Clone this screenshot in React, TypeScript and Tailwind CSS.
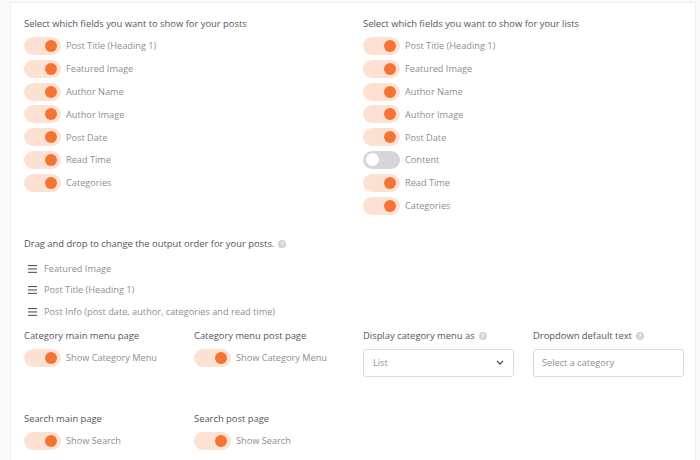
import React from 'react'

const font = { fontFamily: '"Open Sans", "Liberation Sans", sans-serif' }

function Toggle({ on = true }: { on?: boolean }) {
  return (
    <div
      className={`w-[37px] h-[18px] rounded-full flex items-center shrink-0 ${
        on ? 'bg-[#fde2d4] justify-end pr-[4px]' : 'bg-[#d6d6d6] justify-start pl-[3px]'
      }`}
    >
      <div className={`rounded-full ${on ? 'w-[12px] h-[12px] bg-[#f47533]' : 'w-[13px] h-[13px] bg-white'}`} />
    </div>
  )
}

function ToggleRow({ label, on = true }: { label: string; on?: boolean }) {
  return (
    <div className="flex items-center gap-[5px] h-[18px]">
      <Toggle on={on} />
      <span className="text-[9.2px] text-[#8c8f94] leading-none">{label}</span>
    </div>
  )
}

function Help() {
  return (
    <span className="inline-flex items-center justify-center w-[8px] h-[8px] rounded-full bg-[#d3d3d3] text-white text-[6px] font-bold leading-none ml-[4px]">
      ?
    </span>
  )
}

function Heading({ children }: { children: React.ReactNode }) {
  return <div className="text-[9.4px] text-[#50575e] leading-[14px] flex items-center">{children}</div>
}

function Hamburger() {
  return (
    <svg width="9" height="8" viewBox="0 0 9 8" className="shrink-0">
      <rect x="0" y="0" width="9" height="1.1" fill="#555" />
      <rect x="0" y="3.4" width="9" height="1.1" fill="#555" />
      <rect x="0" y="6.8" width="9" height="1.1" fill="#555" />
    </svg>
  )
}

const postFields = ['Post Title (Heading 1)', 'Featured Image', 'Author Name', 'Author Image', 'Post Date', 'Read Time', 'Categories']
const listFields: [string, boolean][] = [
  ['Post Title (Heading 1)', true],
  ['Featured Image', true],
  ['Author Name', true],
  ['Author Image', true],
  ['Post Date', true],
  ['Content', false],
  ['Read Time', true],
  ['Categories', true],
]
const order = ['Featured Image', 'Post Title (Heading 1)', 'Post Info (post date, author, categories and read time)']

export default function App() {
  return (
    <div className="w-[700px] h-[460px] bg-[#fafafa] overflow-hidden" style={font}>
      <div className="ml-[10px] mt-[2px] w-[686px] h-[470px] bg-white border border-[#efefef] pl-[13px] pt-[14px]">
        <div className="grid grid-cols-[339px_1fr]">
          <div>
            <Heading>Select which fields you want to show for your posts</Heading>
            <div className="flex flex-col gap-[4.8px] mt-[6px]">
              {postFields.map((f) => (
                <ToggleRow key={f} label={f} />
              ))}
            </div>
          </div>
          <div>
            <Heading>Select which fields you want to show for your lists</Heading>
            <div className="flex flex-col gap-[4.8px] mt-[6px]">
              {listFields.map(([f, on]) => (
                <ToggleRow key={f} label={f} on={on} />
              ))}
            </div>
          </div>
        </div>

        <div className="mt-[22px]">
          <Heading>
            Drag and drop to change the output order for your posts.
            <Help />
          </Heading>
          <div className="flex flex-col gap-[7.5px] mt-[11px] pl-[4px]">
            {order.map((o) => (
              <div key={o} className="flex items-center gap-[7px] h-[14px]">
                <Hamburger />
                <span className="text-[9.2px] text-[#8c8f94] leading-none">{o}</span>
              </div>
            ))}
          </div>
        </div>

        <div className="grid grid-cols-[170px_169px_170px_151px] mt-[10px]">
          <div>
            <Heading>Category main menu page</Heading>
            <div className="mt-[6px]">
              <ToggleRow label="Show Category Menu" />
            </div>
          </div>
          <div>
            <Heading>Category menu post page</Heading>
            <div className="mt-[6px]">
              <ToggleRow label="Show Category Menu" />
            </div>
          </div>
          <div>
            <Heading>
              Display category menu as
              <Help />
            </Heading>
            <div className="mt-[6px] w-[151px] h-[28px] border border-[#dcdcde] rounded-[3px] flex items-center justify-between px-[9px]">
              <span className="text-[9.2px] text-[#8c8f94]">List</span>
              <svg width="8" height="5" viewBox="0 0 8 5">
                <path d="M1 1 L4 4 L7 1" fill="none" stroke="#555" strokeWidth="1.3" />
              </svg>
            </div>
          </div>
          <div>
            <Heading>
              Dropdown default text
              <Help />
            </Heading>
            <div className="mt-[6px] w-[151px] h-[28px] border border-[#dcdcde] rounded-[3px] flex items-center px-[8px]">
              <span className="text-[9.2px] text-[#8c8f94]">Select a category</span>
            </div>
          </div>
        </div>

        <div className="grid grid-cols-[170px_169px] mt-[35px]">
          <div>
            <Heading>Search main page</Heading>
            <div className="mt-[6px]">
              <ToggleRow label="Show Search" />
            </div>
          </div>
          <div>
            <Heading>Search post page</Heading>
            <div className="mt-[6px]">
              <ToggleRow label="Show Search" />
            </div>
          </div>
        </div>
      </div>
    </div>
  )
}
